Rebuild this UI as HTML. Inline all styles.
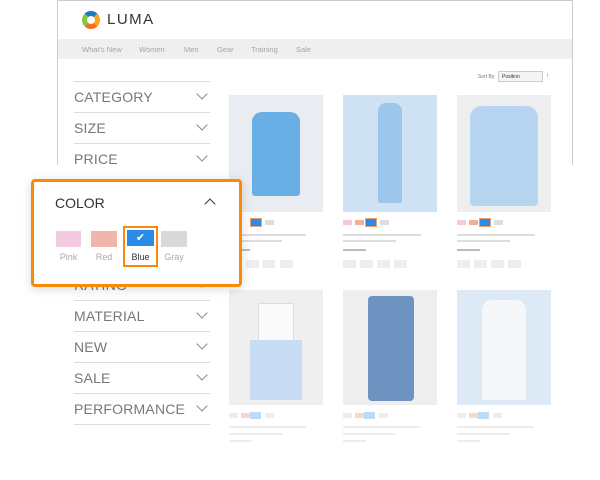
<!DOCTYPE html>
<html><head><style>
*{margin:0;padding:0;box-sizing:border-box}
body{width:600px;height:480px;background:#fff;position:relative;overflow:hidden;font-family:"Liberation Sans",sans-serif}
.a{position:absolute}
.frame{left:57px;top:0;width:516px;height:165px;border-left:1px solid #ccc;border-right:1px solid #ccc;border-top:1px solid #ccc}
.nav{left:58px;top:39px;width:514px;height:20px;background:#efefef}
.nav span{position:absolute;top:6px;font-size:7.5px;color:#a5a5a5}
.row{left:74px;width:136px;height:31px;border-top:1px solid #ddd}
.row b{position:absolute;left:0;top:7px;font-weight:normal;font-size:14px;color:#777;letter-spacing:.2px}
.row i{position:absolute;right:4px;top:8px;width:8px;height:8px;border-right:1.5px solid #888;border-bottom:1.5px solid #888;transform:rotate(45deg)}
.img{background:#e9ecf0}
.sw{position:absolute;height:5px;width:9px}
.ln{position:absolute;height:2px;background:#ddd}
.bt{position:absolute;width:13px;height:8px;background:#eee}
</style></head><body>
<div class="a frame"></div>
<div class="a" style="left:82px;top:11px;width:18px;height:18px;border-radius:50%;border:5px solid #f26f21;border-top-color:#1979c3;border-left-color:#8cc63f;border-right-color:#f9a51a"></div>
<div class="a" style="left:107px;top:11px;font-size:15px;letter-spacing:1.5px;color:#333">LUMA</div>
<div class="a nav"><span style="left:24px">What's New</span><span style="left:81px">Women</span><span style="left:126px">Men</span><span style="left:159px">Gear</span><span style="left:193px">Training</span><span style="left:238px">Sale</span></div>
<div class="a" style="left:478px;top:74px;font-size:5px;color:#777">Sort By</div>
<div class="a" style="left:498px;top:71px;width:45px;height:11px;border:1px solid #ccc;background:#f5f5f5;font-size:5px;padding:2px 3px;color:#333">Position</div>
<div class="a" style="left:546px;top:73px;font-size:6px;color:#555">↑</div>

<div class="a row" style="top:81px"><b>CATEGORY</b><i></i></div>
<div class="a row" style="top:112px"><b>SIZE</b><i></i></div>
<div class="a row" style="top:143px"><b>PRICE</b><i></i></div>
<div class="a row" style="top:269px"><b>RATING</b><i></i></div>
<div class="a row" style="top:300px"><b>MATERIAL</b><i></i></div>
<div class="a row" style="top:331px"><b>NEW</b><i></i></div>
<div class="a row" style="top:362px"><b>SALE</b><i></i></div>
<div class="a row" style="top:393px"><b>PERFORMANCE</b><i></i></div>
<div class="a row" style="top:424px;height:1px"></div>

<!-- products row1 -->
<div class="a img" style="left:229px;top:95px;width:94px;height:117px"></div>
<div class="a" style="left:252px;top:112px;width:48px;height:84px;background:#6aaee6;border-radius:10px 10px 3px 3px"></div>
<div class="a img" style="left:343px;top:95px;width:94px;height:117px;background:#cfe2f3"></div>
<div class="a" style="left:378px;top:103px;width:24px;height:100px;background:#9cc6ec;border-radius:8px 8px 2px 2px"></div>
<div class="a img" style="left:457px;top:95px;width:94px;height:117px;background:#eceef0"></div>
<div class="a" style="left:470px;top:106px;width:68px;height:100px;background:#b7d4f1;border-radius:12px 12px 4px 4px"></div>
<!-- products row2 -->
<div class="a img" style="left:229px;top:290px;width:94px;height:115px;background:#efefef"></div>
<div class="a" style="left:258px;top:303px;width:36px;height:40px;background:#fafafa;border:1px solid #ddd"></div>
<div class="a" style="left:250px;top:340px;width:52px;height:60px;background:#c8ddf4"></div>
<div class="a img" style="left:343px;top:290px;width:94px;height:115px;background:#eee"></div>
<div class="a" style="left:368px;top:296px;width:46px;height:105px;background:#6f93c0;border-radius:4px"></div>
<div class="a img" style="left:457px;top:290px;width:94px;height:115px;background:#dde9f4"></div>
<div class="a" style="left:482px;top:300px;width:44px;height:100px;background:#f5f7fa;border-radius:10px 10px 2px 2px"></div>

<!-- product meta -->
<div class="a" style="left:228px;top:219px">
</div>
<script></script>
<div class="a" style="left:343px;top:220px">
 <div class="sw" style="left:0;background:#f5c8dc"></div><div class="sw" style="left:12px;background:#f2b09a"></div><div class="sw" style="left:22px;top:-2px;width:12px;height:9px;background:#2b8be6;border:1px solid #f0a070"></div><div class="sw" style="left:37px;background:#ddd"></div>
 <div class="ln" style="top:14px;width:78px"></div><div class="ln" style="top:20px;width:53px"></div><div class="ln" style="top:29px;width:23px;background:#bbb"></div>
 <div class="bt" style="top:40px;left:0"></div><div class="bt" style="top:40px;left:17px"></div><div class="bt" style="top:40px;left:34px"></div><div class="bt" style="top:40px;left:51px"></div>
</div>
<div class="a" style="left:457px;top:220px">
 <div class="sw" style="left:0;background:#f5c8dc"></div><div class="sw" style="left:12px;background:#f2b09a"></div><div class="sw" style="left:22px;top:-2px;width:12px;height:9px;background:#2b8be6;border:1px solid #f0a070"></div><div class="sw" style="left:37px;background:#ddd"></div>
 <div class="ln" style="top:14px;width:78px"></div><div class="ln" style="top:20px;width:53px"></div><div class="ln" style="top:29px;width:23px;background:#bbb"></div>
 <div class="bt" style="top:40px;left:0"></div><div class="bt" style="top:40px;left:17px"></div><div class="bt" style="top:40px;left:34px"></div><div class="bt" style="top:40px;left:51px"></div>
</div>
<div class="a" style="left:242px;top:220px">
 <div class="sw" style="left:8px;top:-2px;width:12px;height:9px;background:#2b8be6;border:1px solid #f0a070"></div><div class="sw" style="left:23px;background:#ddd"></div>
 <div class="ln" style="top:14px;width:64px"></div><div class="ln" style="top:20px;width:40px"></div><div class="ln" style="top:29px;width:8px;background:#bbb"></div>
 <div class="bt" style="top:40px;left:4px"></div><div class="bt" style="top:40px;left:20px"></div><div class="bt" style="top:40px;left:38px"></div>
</div>
<!-- row2 meta faded -->
<div class="a" style="left:229px;top:413px;opacity:.5">
 <div class="sw" style="left:0;background:#ddd"></div><div class="sw" style="left:12px;background:#f2b09a"></div><div class="sw" style="left:21px;top:-1px;width:11px;height:7px;background:#7ab8f0"></div><div class="sw" style="left:36px;background:#ddd"></div>
 <div class="ln" style="top:13px;width:77px"></div><div class="ln" style="top:20px;width:53px"></div><div class="ln" style="top:27px;width:23px"></div>
</div>
<div class="a" style="left:343px;top:413px;opacity:.5">
 <div class="sw" style="left:0;background:#ddd"></div><div class="sw" style="left:12px;background:#f2b09a"></div><div class="sw" style="left:21px;top:-1px;width:11px;height:7px;background:#7ab8f0"></div><div class="sw" style="left:36px;background:#ddd"></div>
 <div class="ln" style="top:13px;width:77px"></div><div class="ln" style="top:20px;width:53px"></div><div class="ln" style="top:27px;width:23px"></div>
</div>
<div class="a" style="left:457px;top:413px;opacity:.5">
 <div class="sw" style="left:0;background:#ddd"></div><div class="sw" style="left:12px;background:#f2b09a"></div><div class="sw" style="left:21px;top:-1px;width:11px;height:7px;background:#7ab8f0"></div><div class="sw" style="left:36px;background:#ddd"></div>
 <div class="ln" style="top:13px;width:77px"></div><div class="ln" style="top:20px;width:53px"></div><div class="ln" style="top:27px;width:23px"></div>
</div>

<!-- popup -->
<div class="a" style="left:31px;top:179px;width:211px;height:108px;background:#fff;border:3px solid #f98a09;border-radius:4px;box-shadow:0 2px 10px rgba(0,0,0,.15)">
 <div class="a" style="left:21px;top:13px;font-size:14px;color:#333">COLOR</div>
 <div class="a" style="left:172px;top:18px;width:8px;height:8px;border-left:1.6px solid #333;border-top:1.6px solid #333;transform:rotate(45deg)"></div>
 <div class="a" style="left:22px;top:49px;width:25px;height:16px;background:#f3cbe0"></div>
 <div class="a" style="left:22px;top:70px;font-size:9px;color:#aaa;width:25px;text-align:center">Pink</div>
 <div class="a" style="left:57px;top:49px;width:26px;height:16px;background:#f0b5ad"></div>
 <div class="a" style="left:57px;top:70px;font-size:9px;color:#aaa;width:26px;text-align:center">Red</div>
 <div class="a" style="left:89px;top:44px;width:35px;height:41px;border:2px solid #f98a09"></div>
 <div class="a" style="left:93px;top:48px;width:27px;height:16px;background:#2a8be6;color:#fff;font-size:11px;text-align:center;line-height:16px">✔</div>
 <div class="a" style="left:91px;top:70px;font-size:9px;color:#333;width:31px;text-align:center">Blue</div>
 <div class="a" style="left:127px;top:49px;width:26px;height:16px;background:#d9d9d9"></div>
 <div class="a" style="left:127px;top:70px;font-size:9px;color:#aaa;width:26px;text-align:center">Gray</div>
</div>
</body></html>
